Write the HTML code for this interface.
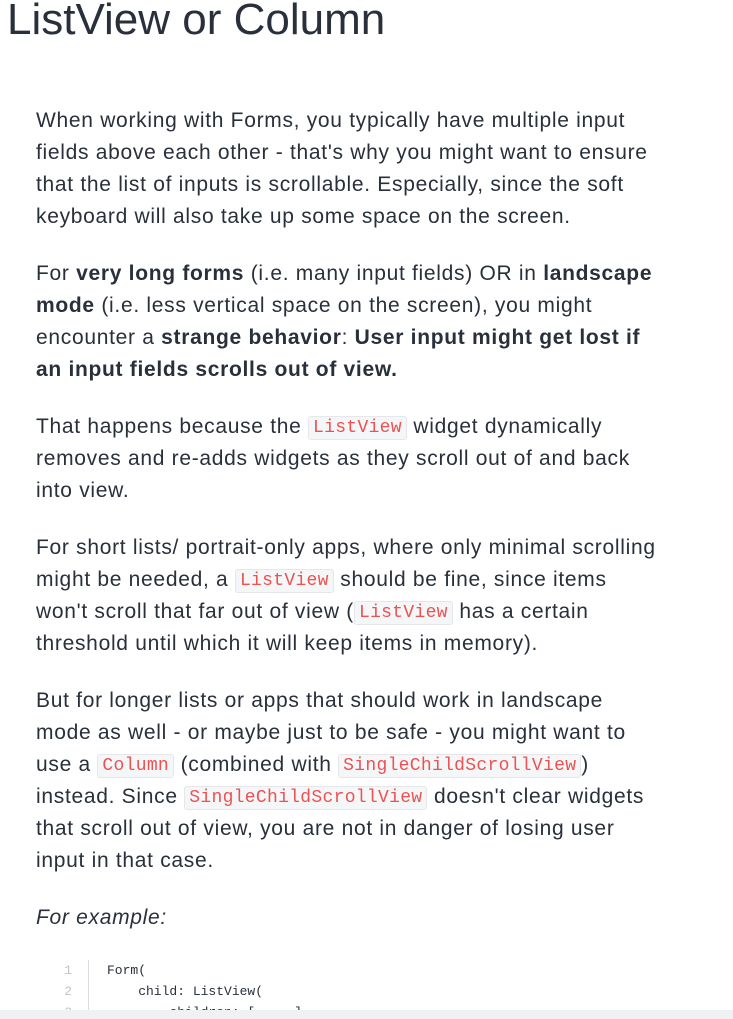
<!DOCTYPE html>
<html><head><meta charset="utf-8"><style>
html,body{margin:0;padding:0;background:#fff;width:733px;height:1019px;overflow:hidden;}
body{font-family:"Liberation Sans",sans-serif;color:#29303b;position:relative;}
h1{position:absolute;left:7px;top:-8px;margin:0;font-weight:400;font-size:44px;line-height:56px;color:#29303b;white-space:nowrap;}
.c{position:absolute;left:36px;top:105px;width:700px;white-space:nowrap;}
p{margin:0 0 25px 0;font-size:21px;line-height:32px;letter-spacing:0.7px;}
code{font-family:"Liberation Mono",monospace;font-size:18px;line-height:20px;letter-spacing:0.3px;color:#ec5252;background:#f5f6f7;border:1px solid #e6e7ea;border-radius:3px;padding:1px 4px;display:inline-block;vertical-align:1px;}
.code{position:absolute;left:50px;top:960px;font-family:"Liberation Mono",monospace;font-size:13px;line-height:21px;color:#29303b;white-space:pre;}
.ln{position:absolute;left:0;width:22px;text-align:right;color:#c4c4c4;}
.bar{position:absolute;left:88px;top:960px;width:1px;height:60px;background:#dcdcdc;}
.sb{position:absolute;left:0;top:1010px;width:733px;height:9px;background:#f0f1f3;}
</style></head><body>
<h1>ListView or Column</h1>
<div class="c">
<p>When working with Forms, you typically have multiple input<br>fields above each other - that's why you might want to ensure<br>that the list of inputs is scrollable. Especially, since the soft<br>keyboard will also take up some space on the screen.</p>
<p>For <b>very long forms</b> (i.e. many input fields) OR in <b>landscape</b><br><b>mode</b> (i.e. less vertical space on the screen), you might<br>encounter a <b>strange behavior</b>: <b>User input might get lost if</b><br><b>an input fields scrolls out of view.</b></p>
<p>That happens because the <code>ListView</code> widget dynamically<br>removes and re-adds widgets as they scroll out of and back<br>into view.</p>
<p>For short lists/ portrait-only apps, where only minimal scrolling<br>might be needed, a <code>ListView</code> should be fine, since items<br>won't scroll that far out of view (<code>ListView</code> has a certain<br>threshold until which it will keep items in memory).</p>
<p>But for longer lists or apps that should work in landscape<br>mode as well - or maybe just to be safe - you might want to<br>use a <code>Column</code> (combined with <code>SingleChildScrollView</code>)<br>instead. Since <code>SingleChildScrollView</code> doesn't clear widgets<br>that scroll out of view, you are not in danger of losing user<br>input in that case.</p>
<p><i>For example:</i></p>
</div>
<div class="bar"></div>
<div class="code"><div style="position:relative;height:21px"><span class="ln">1</span><span style="position:absolute;left:57px">Form(</span></div><div style="position:relative;height:21px"><span class="ln">2</span><span style="position:absolute;left:57px">    child: ListView(</span></div><div style="position:relative;height:21px"><span class="ln">3</span><span style="position:absolute;left:57px">        children: [ ... ]</span></div></div>
<div class="sb"></div>
</body></html>
